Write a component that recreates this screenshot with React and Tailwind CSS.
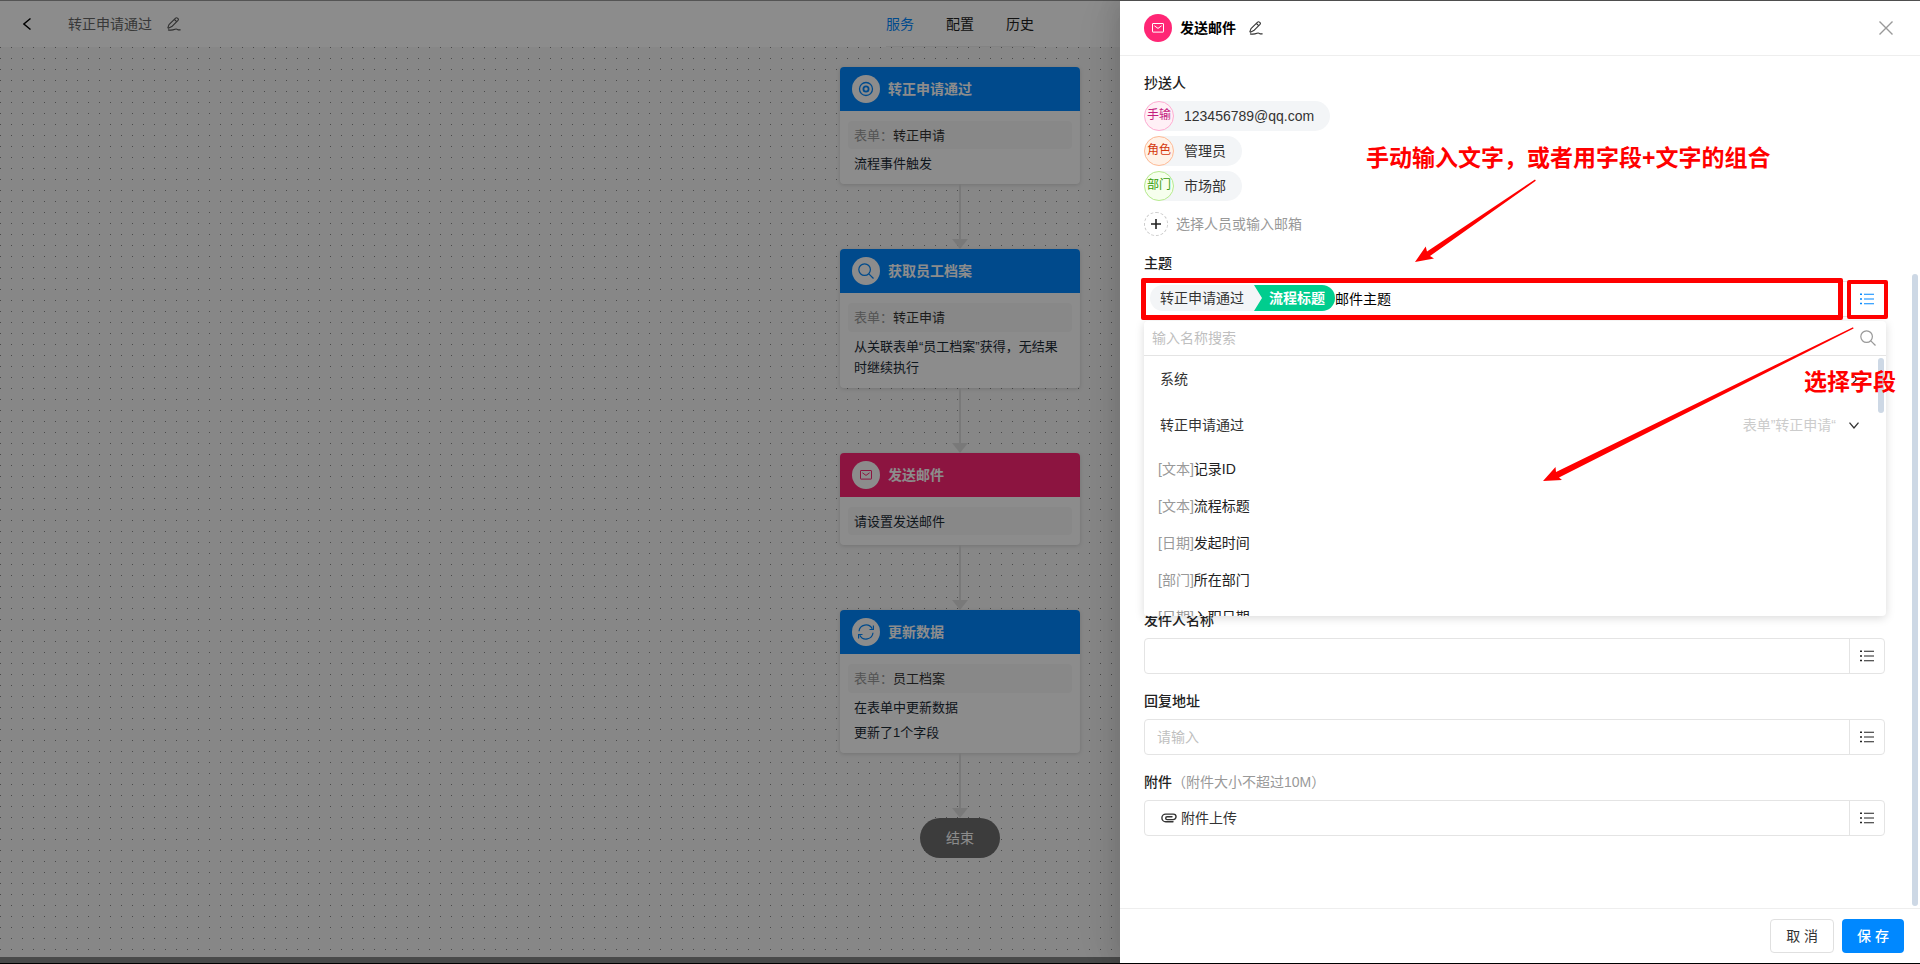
import { useState } from "react";

const flowNodes = [
  {
    id: "start",
    title: "转正申请通过",
    icon: "target",
    headClass: "bg-[#0088ff]",
    iconClass: "text-[#0088ff]",
    rowClass: "h-7",
    form: "转正申请",
    lines: ["流程事件触发"],
  },
  {
    id: "fetch",
    title: "获取员工档案",
    icon: "search",
    headClass: "bg-[#0088ff]",
    iconClass: "text-[#0088ff]",
    rowClass: "h-[29px]",
    form: "转正申请",
    lines: ["从关联表单“员工档案”获得，无结果时继续执行"],
  },
  {
    id: "mail",
    title: "发送邮件",
    icon: "mail",
    headClass: "bg-[#ff2675]",
    iconClass: "text-[#ff2675]",
    rowClass: "h-7",
    hint: "请设置发送邮件",
    lines: [],
  },
  {
    id: "update",
    title: "更新数据",
    icon: "refresh",
    headClass: "bg-[#0088ff]",
    iconClass: "text-[#0088ff]",
    rowClass: "h-[29px]",
    form: "员工档案",
    lines: ["在表单中更新数据", "更新了1个字段"],
  },
];

const recipients = [
  { tag: "手输", name: "123456789@qq.com", tagClass: "border-[#ffadd2] bg-[#fff0f6] text-[#c41d7f]" },
  { tag: "角色", name: "管理员", tagClass: "border-[#ffbb96] bg-[#fff2e8] text-[#d4380d]" },
  { tag: "部门", name: "市场部", tagClass: "border-[#b7eb8f] bg-[#f6ffed] text-[#389e0d]" },
];

const fieldOptions = [
  { type: "文本", name: "记录ID" },
  { type: "文本", name: "流程标题" },
  { type: "日期", name: "发起时间" },
  { type: "部门", name: "所在部门" },
  { type: "日期", name: "入职日期" },
];

function TargetIcon() {
  return (
    <svg width="16" height="16" viewBox="0 0 16 16" fill="none" stroke="currentColor">
      <circle cx="8" cy="8" r="6.5" strokeWidth="1.3" />
      <circle cx="8" cy="8" r="2.6" strokeWidth="1.8" />
    </svg>
  );
}

function SearchIcon() {
  return (
    <svg width="16" height="16" viewBox="0 0 16 16" fill="none" stroke="currentColor" strokeWidth="1.2">
      <circle cx="6.6" cy="6.6" r="5.8" />
      <path d="M10.8 10.8 15.5 15.5" />
    </svg>
  );
}

function MailIcon() {
  return (
    <svg width="12" height="10" viewBox="0 0 12 10" fill="none" stroke="currentColor" strokeWidth="1">
      <rect x="0.5" y="0.5" width="11" height="8.6" rx="0.4" />
      <path d="M2.4 2.8 6 5.4 9.6 2.8" />
    </svg>
  );
}

function RefreshIcon() {
  return (
    <svg width="16" height="16" viewBox="0 0 16 16" fill="none" stroke="currentColor" strokeWidth="1.2">
      <path d="M1 7.2A7 7 0 0 1 14.2 4.8" />
      <path d="M15.4 1.6v3.9h-3.9" />
      <path d="M15 8.8A7 7 0 0 1 1.8 11.2" />
      <path d="M.6 14.4v-3.9h3.9" />
    </svg>
  );
}

function EditIcon() {
  return (
    <svg width="14" height="14" viewBox="0 0 14 14" fill="none" stroke="currentColor" strokeWidth="1.1">
      <path d="M8.6 1.2Q9.5.3 10.400 1.1L11 1.700Q11.800 2.500 11 3.400L4.800 9.600 1.300 11.200.9 10.600 2 7.600Z" strokeLinejoin="round" />
      <path d="M7.400 2.500 9.700 4.700" />
      <path d="M1 12.900C5 13.600 6.400 13 8 12.300C9.600 11.600 10.400 12.400 10.800 12.700C11.600 13.100 12.600 12.900 13.600 12.800" />
    </svg>
  );
}

function ListIcon() {
  return (
    <svg width="14" height="12" viewBox="0 0 14 12" fill="currentColor">
      <path d="M0 .5h2v1.500H0zM0 5.200h2v1.500H0zM0 9.800h2v1.500H0zM4 .8h10v1H4zM4 5.500h10v1H4zM4 10.200h10v1H4z" />
    </svg>
  );
}

function ClipIcon() {
  return (
    <svg width="16" height="10" viewBox="0 0 16 10" fill="none" stroke="currentColor" strokeWidth="1.4" strokeLinecap="round">
      <path d="M12 8.700H4.700A3.800 3.800 0 0 1 4.700 1.100H12.300A2.700 2.700 0 0 1 12.300 6.600H6.100A1.400 1.400 0 0 1 6.100 3.800H11" />
    </svg>
  );
}

const nodeIcons = {
  target: TargetIcon,
  search: SearchIcon,
  mail: MailIcon,
  refresh: RefreshIcon,
};

function Connector() {
  return (
    <div className="flex flex-col items-center h-[65px] text-[#dddddd]">
      <div className="w-[2px] flex-1 bg-current" />
      <svg width="16" height="10" viewBox="0 0 16 10" fill="currentColor">
        <path d="M0 0h16L8 10z" />
      </svg>
    </div>
  );
}

function FlowNode({ node }) {
  const Icon = nodeIcons[node.icon];

  return (
    <div className="w-60 rounded bg-white shadow-[0_1px_4px_rgba(0,0,0,0.15)]">
      <div className={`flex items-center gap-2 h-11 px-3 rounded-t text-white font-bold ${node.headClass}`}>
        <span className={`flex items-center justify-center size-7 rounded-full bg-white ${node.iconClass}`}>
          <Icon />
        </span>
        {node.title}
      </div>
      <div className="flex flex-col gap-1 px-2 py-[10px] text-[13px] leading-[21px] text-[#1b2a36]">
        <div className={`flex items-center px-[6px] rounded bg-[#f8f8f8] ${node.rowClass}`}>
          {node.form ? (
            <>
              <span className="text-[#999999]">表单：</span>
              <span className="text-[#333333]">{node.form}</span>
            </>
          ) : (
            node.hint
          )}
        </div>
        {node.lines.map((line) => (
          <p key={line} className="px-[6px]">
            {line}
          </p>
        ))}
      </div>
    </div>
  );
}

function FieldLabel({ htmlFor, children }) {
  return (
    <label htmlFor={htmlFor} className="block mb-[7px] leading-[22px] font-medium text-[#222222]">
      {children}
    </label>
  );
}

function PickButton({ active, onClick }) {
  return (
    <button
      type="button"
      aria-label="选择字段"
      onClick={onClick}
      className={`flex items-center justify-center w-[35px] shrink-0 border-l border-[#e4e4e4] ${active ? "text-[#0088ff]" : "text-[#222222]"}`}
    >
      <ListIcon />
    </button>
  );
}

function FieldMenu() {
  return (
    <div className="relative z-10 mt-1 -mr-px rounded bg-white shadow-[0_2px_10px_rgba(0,0,0,0.15)]">
      <div className="flex items-center h-[35px] border-b border-[#e4e4e4] pl-2 pr-[10px] text-[#999999]">
        <input
          aria-label="输入名称搜索"
          placeholder="输入名称搜索"
          className="flex-1 min-w-0 outline-none placeholder:text-[#bfbfbf]"
        />
        <SearchIcon />
      </div>
      <div className="relative h-[260px] overflow-hidden text-[#333333]">
        <button type="button" className="flex items-center justify-between w-full h-[46px] pl-4 pr-7">
          系统
          <svg width="6" height="10" viewBox="0 0 6 10" fill="none" stroke="currentColor" strokeWidth="1.3">
            <path d="M.7.5 5.2 5 .7 9.5" />
          </svg>
        </button>
        <button type="button" className="flex items-center w-full h-[46px] pl-4 pr-[27px]">
          转正申请通过
          <span className="ml-auto mr-[13px] text-[#cccccc]">表单”转正申请“</span>
          <svg width="10" height="7" viewBox="0 0 10 7" fill="none" stroke="currentColor" strokeWidth="1.3">
            <path d="M.5.7 5 6 9.5.7" />
          </svg>
        </button>
        <ul className="pt-[2px]">
          {fieldOptions.map((option) => (
            <li key={option.name} className="flex items-center h-[37px] px-[14px] text-[#222222]">
              <span className="text-[#999999]">[{option.type}]</span>
              {option.name}
            </li>
          ))}
        </ul>
        <div className="absolute top-[2px] right-[2px] w-[6px] h-[55px] rounded-full bg-[#cdd8e5]" />
      </div>
    </div>
  );
}

function Arrows() {
  return (
    <svg
      className="absolute left-0 top-0 z-20 pointer-events-none"
      width="800"
      height="560"
      viewBox="1120 1 800 560"
      fill="#ff0000"
    >
      <path d="M1415 262 1425.700 246.500 1427 251.500 1535 179.500 1535.800 180.800 1430 256 1434 258.500Z" />
      <path d="M1543 481 1555.500 467 1556 472 1853 327.300 1853.600 328.600 1559 477.500 1562 480Z" />
    </svg>
  );
}

export default function App() {
  const [menuOpen, setMenuOpen] = useState(true);
  const [subject, setSubject] = useState("邮件主题");

  return (
    <div className="relative h-screen overflow-hidden bg-white text-sm font-['Liberation_Sans','Noto_Sans_CJK_SC',sans-serif]">
      <div className="flex flex-col h-full border-t border-b border-t-[#999999] border-b-black">
        <header className="grid grid-cols-[1fr_auto_1fr] h-[46px] shrink-0 bg-white">
          <div className="flex items-center pl-[23px]">
            <button type="button" aria-label="返回" className="text-black">
              <svg width="8" height="12" viewBox="0 0 8 12" fill="none" stroke="currentColor" strokeWidth="1.4">
                <path d="M7.500.5.900 6l6.600 5.500" />
              </svg>
            </button>
            <span className="ml-[37px] text-[#666666]">转正申请通过</span>
            <button type="button" aria-label="编辑" className="ml-[15px] text-[#555555]">
              <EditIcon />
            </button>
          </div>
          <nav className="flex items-center gap-8 border-b border-[#eeeeee] text-[#222222]">
            <a href="#service" className="text-[#0088ff]">服务</a>
            <a href="#config">配置</a>
            <a href="#history">历史</a>
          </nav>
        </header>
        <main className="flex-1 min-h-0 overflow-hidden flex flex-col items-center pt-5 bg-[#f6f6f6] bg-[linear-gradient(#f6f6f6_10px,transparent_10px),linear-gradient(90deg,#888888_1px,transparent_1px)] bg-[size:11px_11px] bg-[position:0_1px,0_0]">
          {flowNodes.map((node) => (
            <div key={node.id}>
              <FlowNode node={node} />
              <Connector />
            </div>
          ))}
          <div className="flex items-center justify-center w-20 h-10 shrink-0 rounded-full bg-[#6d6d6d] text-white">
            结束
          </div>
        </main>
        <div className="h-[6px] shrink-0 bg-[#868888]" />
      </div>

      <div className="absolute inset-0 bg-black/45" />

      <aside className="absolute top-px bottom-px right-0 flex flex-col w-[800px] max-w-full bg-white shadow-[-6px_0_16px_rgba(0,0,0,0.08),-9px_0_28px_rgba(0,0,0,0.05),-12px_0_48px_rgba(0,0,0,0.03)]">
        <header className="flex items-center h-[55px] shrink-0 pl-6 pr-[27px] pb-px border-b border-[#eeeeee]">
          <span className="flex items-center justify-center size-7 rounded-full bg-[#ff2675] text-white">
            <MailIcon />
          </span>
          <h2 className="ml-2 font-bold text-black">发送邮件</h2>
          <button type="button" aria-label="编辑" className="ml-[13px] text-[#333333]">
            <EditIcon />
          </button>
          <button type="button" aria-label="关闭" className="ml-auto text-[#999999]">
            <svg width="14" height="14" viewBox="0 0 14 14" fill="none" stroke="currentColor" strokeWidth="1.4">
              <path d="M.5.5 13.500 13.500M13.500.5.5 13.500" />
            </svg>
          </button>
        </header>

        <div className="flex-1 min-h-0 overflow-hidden pl-6 pr-[35px] pt-4">
          <FieldLabel>抄送人</FieldLabel>
          <ul className="flex flex-col items-start gap-[5px]">
            {recipients.map((item) => (
              <li key={item.tag} className="flex items-center h-[30px] pr-4 rounded-full bg-[#f3f5f7] text-[#333333]">
                <span
                  className={`flex items-center justify-center size-[30px] mr-[10px] pb-[2px] rounded-full border text-xs ${item.tagClass}`}
                >
                  {item.tag}
                </span>
                {item.name}
              </li>
            ))}
          </ul>
          <button type="button" className="flex items-center gap-2 mt-[11px] mb-4 h-6 text-[#999999]">
            <span className="flex items-center justify-center size-6 rounded-full border border-dashed border-[#cccccc] text-[#222222]">
              <svg width="10" height="10" viewBox="0 0 10 10" fill="currentColor">
                <path d="M4.200 0h1.600v4.200H10v1.600H5.800V10H4.200V5.800H0V4.200h4.200z" />
              </svg>
            </span>
            选择人员或输入邮箱
          </button>

          <FieldLabel htmlFor="subject">主题</FieldLabel>
          <div className="relative flex h-9 border border-[#e4e4e4] rounded">
            <div className="flex flex-1 min-w-0 items-center pl-[5px] pb-[2px]">
              <span className="flex items-center h-[26px] pl-[10px] pr-[18px] rounded-l-full bg-[#f3f5f7] text-[#333333]">
                转正申请通过
              </span>
              <span className="flex items-center h-[26px] -ml-2 pl-[15px] pr-[10px] rounded-r-full bg-[#00cd8e] font-bold text-white [clip-path:polygon(0_0,100%_0,100%_100%,0_100%,8px_50%)]">
                流程标题
              </span>
              <input
                id="subject"
                value={subject}
                onChange={(e) => setSubject(e.target.value)}
                className="flex-1 min-w-0 h-[26px] text-black outline-none"
              />
            </div>
            <PickButton active onClick={() => setMenuOpen(!menuOpen)} />
            <div className="absolute -left-1 right-[41px] -top-1 -bottom-1 z-20 border-5 border-[#ff0000] rounded-xs pointer-events-none" />
            <div className="absolute w-[41px] -right-1 -top-[2px] -bottom-[3px] z-20 border-4 border-[#ff0000] rounded-xs pointer-events-none" />
          </div>
          {menuOpen && <FieldMenu />}

          <div className="-mt-[7px]">
            <FieldLabel htmlFor="sender">发件人名称</FieldLabel>
            <div className="flex h-9 mb-4 border border-[#e4e4e4] rounded">
              <input id="sender" className="flex-1 min-w-0 px-3 outline-none" />
              <PickButton />
            </div>

            <FieldLabel htmlFor="reply">回复地址</FieldLabel>
            <div className="flex h-9 mb-4 border border-[#e4e4e4] rounded">
              <input
                id="reply"
                placeholder="请输入"
                className="flex-1 min-w-0 px-3 outline-none placeholder:text-[#bfbfbf]"
              />
              <PickButton />
            </div>

            <FieldLabel htmlFor="attachment">
              附件<span className="font-normal text-[#999999]">（附件大小不超过10M）</span>
            </FieldLabel>
            <div className="flex h-9 border border-[#e4e4e4] rounded">
              <button id="attachment" type="button" className="flex flex-1 items-center gap-1 px-4 text-[#333333]">
                <ClipIcon />
                附件上传
              </button>
              <PickButton />
            </div>
          </div>
        </div>

        <footer className="flex items-center justify-end gap-2 h-[55px] shrink-0 px-4 border-t border-[#eeeeee]">
          <button type="button" className="h-[34px] px-[15px] rounded border border-[#e0e0e0] text-[#333333]">
            取 消
          </button>
          <button type="button" className="h-[34px] px-[15px] rounded bg-[#0088ff] font-medium text-white">
            保 存
          </button>
        </footer>

        <div className="absolute right-[2px] top-[273px] bottom-[57px] w-[6px] rounded-full bg-[#cdd8e5]" />

        <Arrows />
        <p className="absolute left-[246px] top-[141px] z-20 text-[23px] leading-8 font-bold text-[#ff0000] whitespace-nowrap">
          手动输入文字，或者用字段+文字的组合
        </p>
        <p className="absolute right-[24px] top-[365px] z-20 text-[23px] leading-8 font-bold text-[#ff0000] whitespace-nowrap">
          选择字段
        </p>
      </aside>
    </div>
  );
}
